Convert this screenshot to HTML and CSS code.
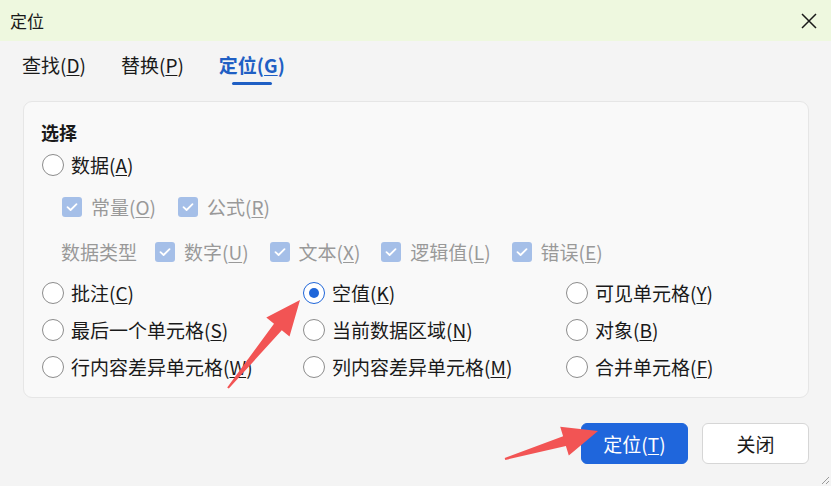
FILE: index.html
```html
<!DOCTYPE html>
<html lang="zh-CN">
<head>
<meta charset="utf-8">
<title>定位</title>
<link rel="stylesheet" href="styles.css">
</head>
<body>
<div class="dialog">
  <div class="titlebar">
    <span class="title">定位</span>
    <svg class="close" width="16" height="16" viewBox="0 0 16 16"><path d="M1 1L15 15M15 1L1 15" stroke="#1a1a1a" stroke-width="1.5" fill="none"/></svg>
  </div>
  <div class="tabs">
    <div class="tab"><span class="tabtext">查找(<u>D</u>)</span></div>
    <div class="tab"><span class="tabtext">替换(<u>P</u>)</span></div>
    <div class="tab active"><span class="tabtext">定位(<u>G</u>)</span></div>
  </div>
  <div class="panel">
    <div class="heading">选择</div>
    <div class="row r-data">
      <span class="radio"></span><span class="label">数据(<u>A</u>)</span>
    </div>
    <div class="row r-check disabled">
      <span class="cb"><svg width="20" height="20" viewBox="0 0 20 20"><path d="M5.5 10.2L8.6 13L14.5 7.2" stroke="#fff" stroke-width="1.8" fill="none" stroke-linecap="round" stroke-linejoin="round"/></svg></span><span class="label">常量(<u>O</u>)</span>
      <span class="cb g1"><svg width="20" height="20" viewBox="0 0 20 20"><path d="M5.5 10.2L8.6 13L14.5 7.2" stroke="#fff" stroke-width="1.8" fill="none" stroke-linecap="round" stroke-linejoin="round"/></svg></span><span class="label">公式(<u>R</u>)</span>
    </div>
    <div class="row r-type disabled">
      <span class="label typelabel">数据类型</span>
      <span class="cb"><svg width="20" height="20" viewBox="0 0 20 20"><path d="M5.5 10.2L8.6 13L14.5 7.2" stroke="#fff" stroke-width="1.8" fill="none" stroke-linecap="round" stroke-linejoin="round"/></svg></span><span class="label">数字(<u>U</u>)</span>
      <span class="cb g2"><svg width="20" height="20" viewBox="0 0 20 20"><path d="M5.5 10.2L8.6 13L14.5 7.2" stroke="#fff" stroke-width="1.8" fill="none" stroke-linecap="round" stroke-linejoin="round"/></svg></span><span class="label">文本(<u>X</u>)</span>
      <span class="cb g2"><svg width="20" height="20" viewBox="0 0 20 20"><path d="M5.5 10.2L8.6 13L14.5 7.2" stroke="#fff" stroke-width="1.8" fill="none" stroke-linecap="round" stroke-linejoin="round"/></svg></span><span class="label">逻辑值(<u>L</u>)</span>
      <span class="cb g2"><svg width="20" height="20" viewBox="0 0 20 20"><path d="M5.5 10.2L8.6 13L14.5 7.2" stroke="#fff" stroke-width="1.8" fill="none" stroke-linecap="round" stroke-linejoin="round"/></svg></span><span class="label">错误(<u>E</u>)</span>
    </div>
    <div class="grid">
      <div class="opt"><span class="radio"></span><span class="label">批注(<u>C</u>)</span></div>
      <div class="opt"><span class="radio checked"></span><span class="label">空值(<u>K</u>)</span></div>
      <div class="opt"><span class="radio"></span><span class="label">可见单元格(<u>Y</u>)</span></div>
      <div class="opt"><span class="radio"></span><span class="label">最后一个单元格(<u>S</u>)</span></div>
      <div class="opt"><span class="radio"></span><span class="label">当前数据区域(<u>N</u>)</span></div>
      <div class="opt"><span class="radio"></span><span class="label">对象(<u>B</u>)</span></div>
      <div class="opt"><span class="radio"></span><span class="label">行内容差异单元格(<u>W</u>)</span></div>
      <div class="opt"><span class="radio"></span><span class="label">列内容差异单元格(<u>M</u>)</span></div>
      <div class="opt"><span class="radio"></span><span class="label">合并单元格(<u>F</u>)</span></div>
    </div>
  </div>
  <div class="buttons">
    <button class="btn primary">定位(<u>T</u>)</button>
    <button class="btn">关闭</button>
  </div>
  <svg class="grip" width="10" height="10" viewBox="0 0 10 10"><path d="M9 2L2 9M9 6L6 9" stroke="#9a9a9a" stroke-width="1" fill="none"/></svg>
  <svg class="arrows" width="831" height="486" viewBox="0 0 831 486">
    <polygon fill="#f25454" points="300,300 266.3,317.5 274,323.8 227.2,387.4 228.8,388.6 281.8,330.2 289.5,336.5"/>
    <polygon fill="#f25454" points="598,431 560.2,426.7 563.1,436.3 504.7,458 505.3,460 565.9,445.9 568.8,455.5"/>
  </svg>
</div>
</body>
</html>
```

FILE: styles.css
```css
* { box-sizing: border-box; }
html, body { margin: 0; padding: 0; }
body {
  width: 831px;
  height: 486px;
  overflow: hidden;
  background: #f4f4f4;
  font-family: "Noto Sans CJK SC", "Noto Sans", sans-serif;
  color: #1a1a1a;
}
u { text-decoration: underline; text-underline-offset: 2px; text-decoration-thickness: 1px; }
.dialog {
  position: relative;
  width: 831px;
  height: 486px;
  display: flex;
  flex-direction: column;
}
.titlebar {
  height: 41px;
  background: #eef8df;
  display: flex;
  align-items: center;
  justify-content: space-between;
  padding: 0 14px 0 10px;
}
.title { font-size: 17px; line-height: 24px; }
.close { display: block; margin-top: 1px; }
.tabs {
  display: flex;
  gap: 35px;
  padding: 12px 0 0 22px;
  height: 60px;
}
.tab {
  display: flex;
  flex-direction: column;
  align-items: center;
  color: #1a1a1a;
}
.tabtext { font-size: 19px; line-height: 24px; white-space: nowrap; }
.tab::after {
  content: "";
  display: block;
  width: 40px;
  height: 3px;
  margin-top: 5px;
  border-radius: 2px;
  background: transparent;
}
.tab.active { color: #1f5fc4; font-weight: bold; }
.tab.active::after { background: #1f5fc4; }
.panel {
  margin: 0 22px 0 23px;
  height: 297px;
  background: #f9f9f9;
  border: 1px solid #e6e6e6;
  border-radius: 9px;
  padding: 16px 16px 0 17px;
  font-size: 19px;
}
.heading { height: 28px; line-height: 28px; font-weight: bold; font-size: 18px; }
.row { display: flex; align-items: center; }
.label { line-height: 24px; white-space: nowrap; }
.r-data { height: 38px; }
.r-data .radio { margin-left: 1px; margin-right: 7px; }
.disabled { color: #999; }
.r-check { height: 46px; padding-left: 21px; }
.r-type { height: 44px; padding-left: 20px; }
.cb {
  width: 20px;
  height: 20px;
  border-radius: 3px;
  background: #a5bfe8;
  margin-right: 9px;
  flex: none;
}
.cb svg { display: block; }
.cb.g1 { margin-left: 22px; }
.typelabel { margin-right: 18px; }
.cb.g2 { margin-left: 21px; }
.radio {
  width: 22px;
  height: 22px;
  border-radius: 50%;
  border: 1.5px solid #8c8c8c;
  background: #fff;
  flex: none;
  display: flex;
  align-items: center;
  justify-content: center;
}
.radio.checked { border-color: #1f66d9; }
.radio.checked::after {
  content: "";
  width: 10px;
  height: 10px;
  border-radius: 50%;
  background: #1f66d9;
}
.grid {
  display: grid;
  grid-template-columns: 261px 263px 1fr;
  grid-auto-rows: 37px;
  padding-left: 1px;
}
.opt { display: flex; align-items: center; gap: 7px; }
.buttons {
  display: flex;
  justify-content: flex-end;
  gap: 14px;
  padding-right: 22px;
  margin-top: 25px;
}
.btn {
  width: 107px;
  height: 41px;
  border-radius: 6px;
  border: 1px solid #d6d6d6;
  background: #fff;
  font-family: inherit;
  font-size: 19px;
  color: #1a1a1a;
  padding: 0;
}
.btn.primary {
  background: #1f66dc;
  border-color: #1f66dc;
  color: #fff;
}
.grip { position: absolute; right: 1px; bottom: 1px; }
.arrows { position: absolute; left: 0; top: 0; pointer-events: none; }
```
